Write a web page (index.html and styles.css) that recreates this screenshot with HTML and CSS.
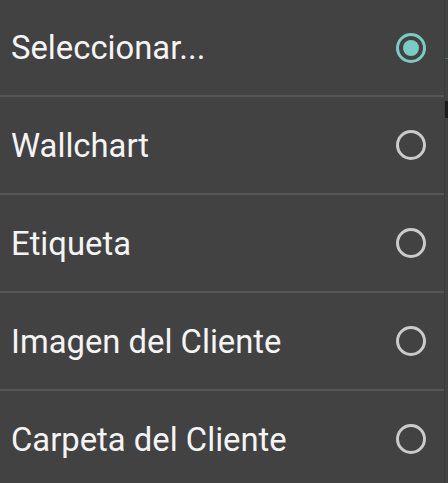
FILE: index.html
```html
<!DOCTYPE html>
<html lang="es">
<head>
<meta charset="utf-8">
<title>Seleccionar</title>
<link rel="stylesheet" href="styles.css">
</head>
<body>
<div class="screen">
  <ul class="list">
    <li class="item first"><span class="label">Seleccionar...</span><span class="radio checked"></span></li>
    <li class="item"><span class="label">Wallchart</span><span class="radio"></span></li>
    <li class="item"><span class="label">Etiqueta</span><span class="radio"></span></li>
    <li class="item"><span class="label">Imagen del Cliente</span><span class="radio"></span></li>
    <li class="item"><span class="label">Carpeta del Cliente</span><span class="radio"></span></li>
  </ul>
  <div class="edge">
    <span class="tick"></span>
    <span class="bar"></span>
  </div>
</div>
</body>
</html>
```
FILE: styles.css
```css
html, body {
  margin: 0;
  padding: 0;
  background: #424242;
  overflow: hidden;
}
.screen {
  display: flex;
  width: 448px;
  height: 483px;
}
.list {
  list-style: none;
  margin: 0;
  padding: 0;
  width: 444px;
  border-right: 1px solid #3c3c3c;
  font-family: Roboto, "Noto Sans", sans-serif;
}
.item {
  display: flex;
  align-items: center;
  justify-content: space-between;
  height: 96px;
  padding: 0 18px 0 11px;
  border-top: 2px solid #575757;
  box-sizing: content-box;
}
.item.first {
  height: 95px;
  border-top: none;
}
.label {
  color: #f4f4f4;
  font-size: 32.8px;
  line-height: 1;
  padding-top: 2px;
}
.radio {
  box-sizing: border-box;
  width: 30px;
  height: 30px;
  border: 3px solid #cbcbcb;
  border-radius: 50%;
  display: flex;
  align-items: center;
  justify-content: center;
}
.radio.checked {
  border-color: #7ccbc3;
}
.radio.checked::after {
  content: "";
  width: 16px;
  height: 16px;
  border-radius: 50%;
  background: #7ccbc3;
}
.edge {
  position: relative;
  flex: 1;
}
.tick {
  position: absolute;
  left: 0;
  top: 58px;
  width: 3px;
  height: 1px;
  background: #2f7c74;
}
.bar {
  position: absolute;
  left: 0;
  top: 101px;
  width: 3px;
  height: 17px;
  background: #1c1c1c;
}
```
